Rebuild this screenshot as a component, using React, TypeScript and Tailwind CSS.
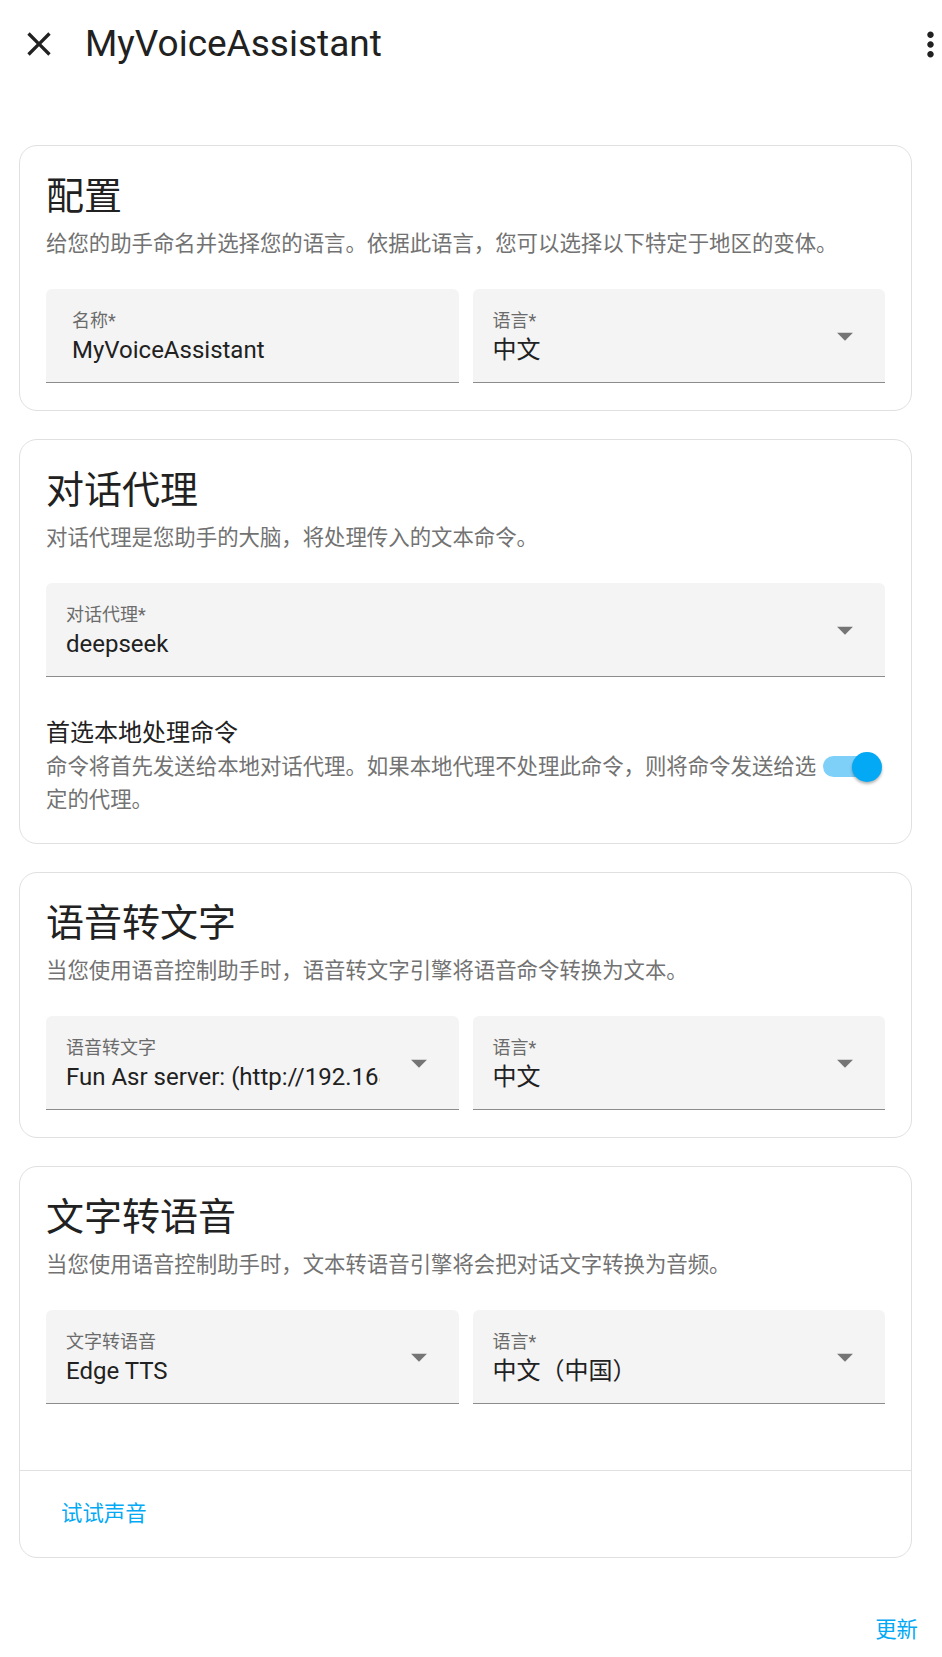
import type { ReactNode } from "react";

// Material icon paths, drawn at the scale of the screenshot
function CloseIcon() {
  return (
    <svg viewBox="0 0 24 24" className="w-[40px] h-[40px] shrink-0" fill="#212121">
      <path d="M19 6.41L17.59 5 12 10.59 6.41 5 5 6.41 10.59 12 5 17.59 6.41 19 12 13.41 17.59 19 19 17.59 13.41 12z" />
    </svg>
  );
}

function MoreIcon() {
  return (
    <svg viewBox="0 0 24 24" className="w-[39px] h-[39px] shrink-0 ml-auto mr-[-8px]" fill="#212121">
      <path d="M12 8c1.1 0 2-.9 2-2s-.9-2-2-2-2 .9-2 2 .9 2 2 2zm0 2c-1.1 0-2 .9-2 2s.9 2 2 2 2-.9 2-2-.9-2-2-2zm0 6c-1.1 0-2 .9-2 2s.9 2 2 2 2-.9 2-2-.9-2-2-2z" />
    </svg>
  );
}

function ArrowDrop() {
  return (
    <svg viewBox="0 0 24 24" className="w-[38px] h-[38px] shrink-0 self-center" fill="#757575">
      <path d="M7 10l5 5 5-5z" />
    </svg>
  );
}

interface FieldProps {
  label: string;
  value: string;
  select?: boolean;
}

function Field({ label, value, select = true }: FieldProps) {
  return (
    <div className="h-[94px] bg-[#f4f4f4] rounded-t-[6px] border-b border-[#8c8c8c] flex pr-[21px]">
      <div className={`flex-1 min-w-0 pt-[20px] ${select ? "pl-[20px] mr-[20px]" : "pl-[26px]"}`}>
        <div className="text-[18px] leading-[24px] text-[#6b6b6b] whitespace-nowrap">{label}</div>
        <div className="mt-[1px] text-[24px] leading-[32px] text-[#212121] whitespace-nowrap overflow-hidden">
          {value}
        </div>
      </div>
      {select && <ArrowDrop />}
    </div>
  );
}

interface CardProps {
  title: string;
  description: string;
  children: ReactNode;
  footer?: ReactNode;
}

function Card({ title, description, children, footer }: CardProps) {
  return (
    <div className="border border-[#e0e0e0] rounded-[18px] bg-white">
      <div className={`px-[26px] pt-[26px] ${footer ? "pb-[66px]" : "pb-[27px]"}`}>
        <h2 className="text-[38px] leading-[48px] text-[#212121] font-normal">{title}</h2>
        <p className="mt-[9px] text-[21.4px] leading-[30px] text-[#727272]">{description}</p>
        <div className="mt-[30px]">{children}</div>
      </div>
      {footer && (
        <div className="border-t border-[#e0e0e0] h-[87px] flex items-center pl-[41px]">{footer}</div>
      )}
    </div>
  );
}

export default function App() {
  return (
    <div className="min-h-screen w-full overflow-hidden bg-white font-['Roboto','Noto_Sans_CJK_SC',sans-serif]">
      <header className="h-[88px] flex items-center pl-[19px]">
        <CloseIcon />
        <h1 className="ml-[26px] text-[37px] leading-[40px] text-[#212121] font-normal">MyVoiceAssistant</h1>
        <MoreIcon />
      </header>

      <main className="mt-[57px] ml-[19px] w-[893px] flex flex-col gap-[28px]">
        <Card title="配置" description="给您的助手命名并选择您的语言。依据此语言，您可以选择以下特定于地区的变体。">
          <div className="grid grid-cols-2 gap-[14px]">
            <Field label="名称*" value="MyVoiceAssistant" select={false} />
            <Field label="语言*" value="中文" />
          </div>
        </Card>

        <Card title="对话代理" description="对话代理是您助手的大脑，将处理传入的文本命令。">
          <Field label="对话代理*" value="deepseek" />
          <div className="mt-[40px] flex items-center">
            <div className="flex-1 min-w-0">
              <div className="text-[24px] leading-[32px] text-[#212121]">首选本地处理命令</div>
              <div className="mt-[1px] text-[21.4px] leading-[33px] text-[#727272]">
                命令将首先发送给本地对话代理。如果本地代理不处理此命令，则将命令发送给选定的代理。
              </div>
            </div>
            <div className="w-[68px] shrink-0 flex justify-end pr-[8px]">
              <div className="relative w-[54px] h-[21px] rounded-full bg-[#7fd0f9]">
                <div className="absolute right-[-5px] top-1/2 -translate-y-1/2 w-[30px] h-[30px] rounded-full bg-[#03a9f4] shadow-[0_2px_3px_rgba(0,0,0,0.3)]" />
              </div>
            </div>
          </div>
        </Card>

        <Card title="语音转文字" description="当您使用语音控制助手时，语音转文字引擎将语音命令转换为文本。">
          <div className="grid grid-cols-2 gap-[14px]">
            <Field label="语音转文字" value="Fun Asr server: (http://192.168.1.100:10095)" />
            <Field label="语言*" value="中文" />
          </div>
        </Card>

        <Card
          title="文字转语音"
          description="当您使用语音控制助手时，文本转语音引擎将会把对话文字转换为音频。"
          footer={<button className="text-[21.4px] leading-[30px] text-[#03a9f4]">试试声音</button>}
        >
          <div className="grid grid-cols-2 gap-[14px]">
            <Field label="文字转语音" value="Edge TTS" />
            <Field label="语言*" value="中文（中国）" />
          </div>
        </Card>
      </main>

      <footer className="mt-[57px] flex justify-end pr-[24px] pb-[27px]">
        <button className="text-[21.4px] leading-[30px] text-[#03a9f4]">更新</button>
      </footer>
    </div>
  );
}
